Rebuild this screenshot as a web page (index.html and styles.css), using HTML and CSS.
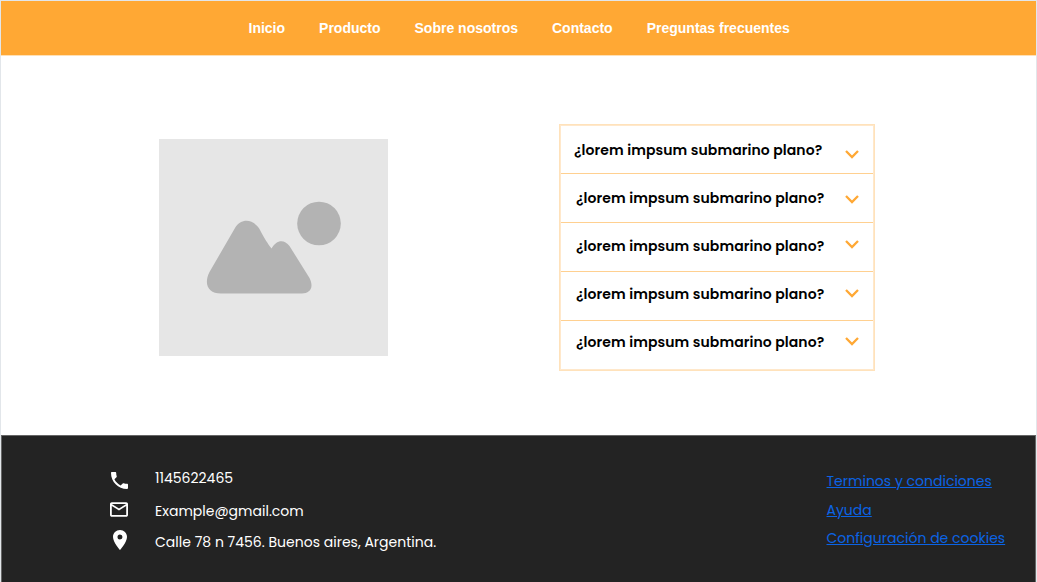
FILE: index.html
```html
<!DOCTYPE html>
<html lang="es">
<head>
<meta charset="utf-8">
<title>Preguntas frecuentes</title>
<link rel="stylesheet" href="styles.css">
</head>
<body>
<div class="page">
  <nav class="nav">
    <a class="n1">Inicio</a><a class="n2">Producto</a><a class="n3">Sobre nosotros</a><a class="n4">Contacto</a><a class="n5">Preguntas frecuentes</a>
  </nav>
  <main class="main">
    <svg class="picture" viewBox="0 0 229 217">
      <rect width="229" height="217" fill="#e6e6e6"/>
      <circle cx="160" cy="84.500" r="21.800" fill="#b3b3b3"/>
      <path d="M76 89C82 79 94 79.500 100.500 90C105.500 99.500 109 105 112.500 109.500C117 101 125 99.500 130.500 107L150.500 139C155.500 149 150.500 154.500 143 154.500H62C49 154.500 44.500 145 50.500 133Z" fill="#b3b3b3"/>
    </svg>
    <section class="faq">
      <div class="row r1"><span class="question">¿lorem impsum submarino plano?</span><svg class="chevron" viewBox="0 0 14 9"><path d="M1 1l6 6 6-6"/></svg></div>
      <div class="row r2"><span class="question">¿lorem impsum submarino plano?</span><svg class="chevron" viewBox="0 0 14 9"><path d="M1 1l6 6 6-6"/></svg></div>
      <div class="row r3"><span class="question">¿lorem impsum submarino plano?</span><svg class="chevron" viewBox="0 0 14 9"><path d="M1 1l6 6 6-6"/></svg></div>
      <div class="row r4"><span class="question">¿lorem impsum submarino plano?</span><svg class="chevron" viewBox="0 0 14 9"><path d="M1 1l6 6 6-6"/></svg></div>
      <div class="row r5"><span class="question">¿lorem impsum submarino plano?</span><svg class="chevron" viewBox="0 0 14 9"><path d="M1 1l6 6 6-6"/></svg></div>
    </section>
  </main>
  <footer class="footer">
    <div class="icons">
      <svg class="icon phone" viewBox="3 3 18 18"><path d="M6.620 10.790c1.440 2.830 3.760 5.140 6.590 6.590l2.200-2.200c.270-.270.670-.360 1.020-.240 1.120.370 2.330.570 3.570.570.550 0 1 .450 1 1V20c0 .550-.450 1-1 1C10.610 21 3 13.390 3 4c0-.550.450-1 1-1h3.500c.550 0 1 .450 1 1 0 1.250.200 2.450.570 3.570.110.350.030.740-.250 1.020z"/></svg>
      <svg class="icon mail" viewBox="2 4 20 16"><path d="M22 6c0-1.100-.900-2-2-2H4c-1.100 0-2 .900-2 2v12c0 1.100.900 2 2 2h16c1.100 0 2-.900 2-2V6zm-2 0l-8 5-8-5h16zm0 12H4V8l8 5 8-5v10z"/></svg>
      <svg class="icon pin" viewBox="5 2 14 20"><path d="M12 2C8.130 2 5 5.130 5 9c0 5.250 7 13 7 13s7-7.750 7-13c0-3.870-3.130-7-7-7zm0 9.500a2.500 2.500 0 1 1 0-5 2.500 2.500 0 0 1 0 5z"/></svg>
    </div>
    <div class="contact">
      <span class="tel">1145622465</span>
      <span class="email">Example@gmail.com</span>
      <span class="address">Calle 78 n 7456. Buenos aires, Argentina.</span>
    </div>
    <div class="links">
      <a class="terms">Terminos y condiciones</a>
      <a class="help">Ayuda</a>
      <a class="cookies">Configuración de cookies</a>
    </div>
  </footer>
</div>
</body>
</html>
```
FILE: styles.css
```css
* { box-sizing: border-box; }
body { margin: 0; background: #fff; font-family: Poppins, Inter, sans-serif; }
.page {
  width: 1037px; height: 582px; overflow: hidden;
  border: 1px solid #e2e6ea; border-bottom: 0;
  display: flex; flex-direction: column;
}
.nav {
  flex: 0 0 55px; display: flex; gap: 34px; padding: 19px 0 0 247.500px;
  background: #ffa834; color: #fff; border-bottom: 1px solid #ffe0b5;
  font: bold 14px/16px "Liberation Sans", Arial, sans-serif;
  white-space: nowrap;
}
.nav a { letter-spacing: 0; }
.main { flex: 0 0 379px; display: flex; align-items: flex-start; padding-left: 158px; }
.picture { width: 229px; height: 217px; margin-top: 83px; display: block; }
.faq {
  width: 316px; height: 247px; margin: 68px 0 0 171px;
  border: 1px solid #ffe2bb; outline: 1px solid #ffe8cb; outline-offset: -2px;
  display: flex; flex-direction: column;
}
.row {
  flex: 0 0 49px; display: flex; align-items: flex-start;
  border-bottom: 1px solid #ffd090; padding-left: 16px;
}
.question { width: 269px; color: #000; font-size: 14px; font-weight: 600; line-height: 20px; letter-spacing: 0.085px; white-space: nowrap; margin-top: 14px; }
.chevron { width: 14px; height: 9px; fill: none; stroke: #ffa834; stroke-width: 2.300; }
.r1 { padding-left: 14px; }
.r1 .question { width: 271px; margin-top: 15px; }
.r1 .chevron { margin-top: 24.500px; }
.r2 .chevron { margin-top: 20.500px; }
.r3 .chevron { margin-top: 17px; }
.r3 .question { margin-top: 13px; }
.r4 .chevron { margin-top: 16.500px; }
.r4 .question { margin-top: 12px; }
.r5 .chevron { margin-top: 15.500px; }
.r5 .question { margin-top: 11px; }
.r5 { border-bottom: 0; }
.footer {
  flex: 1; background: #232323; border: 1px solid #666; border-bottom: 0;
  display: flex; align-items: flex-start; padding-left: 108px; color: #fff;
  font-size: 14px; line-height: 20px; letter-spacing: 0.010px; white-space: nowrap;
}
.icons { width: 45px; display: flex; flex-direction: column; align-items: flex-start; padding-top: 36px; }
.icon { fill: #fff; display: block; }
.phone { width: 17px; height: 17px; margin-left: 1px; }
.mail { width: 18px; height: 15px; margin-top: 13px; }
.pin { width: 14px; height: 20px; margin: 13px 0 0 3px; }
.contact { width: 671.500px; display: flex; flex-direction: column; align-items: flex-start; padding-top: 32px; }
.email { margin-top: 13px; }
.address { margin-top: 11px; }
.links { display: flex; flex-direction: column; align-items: flex-start; padding-top: 35px; color: #0b63e5; }
.links a { text-decoration: underline; }
.help { margin-top: 9px; }
.cookies { margin-top: 8px; }
```
